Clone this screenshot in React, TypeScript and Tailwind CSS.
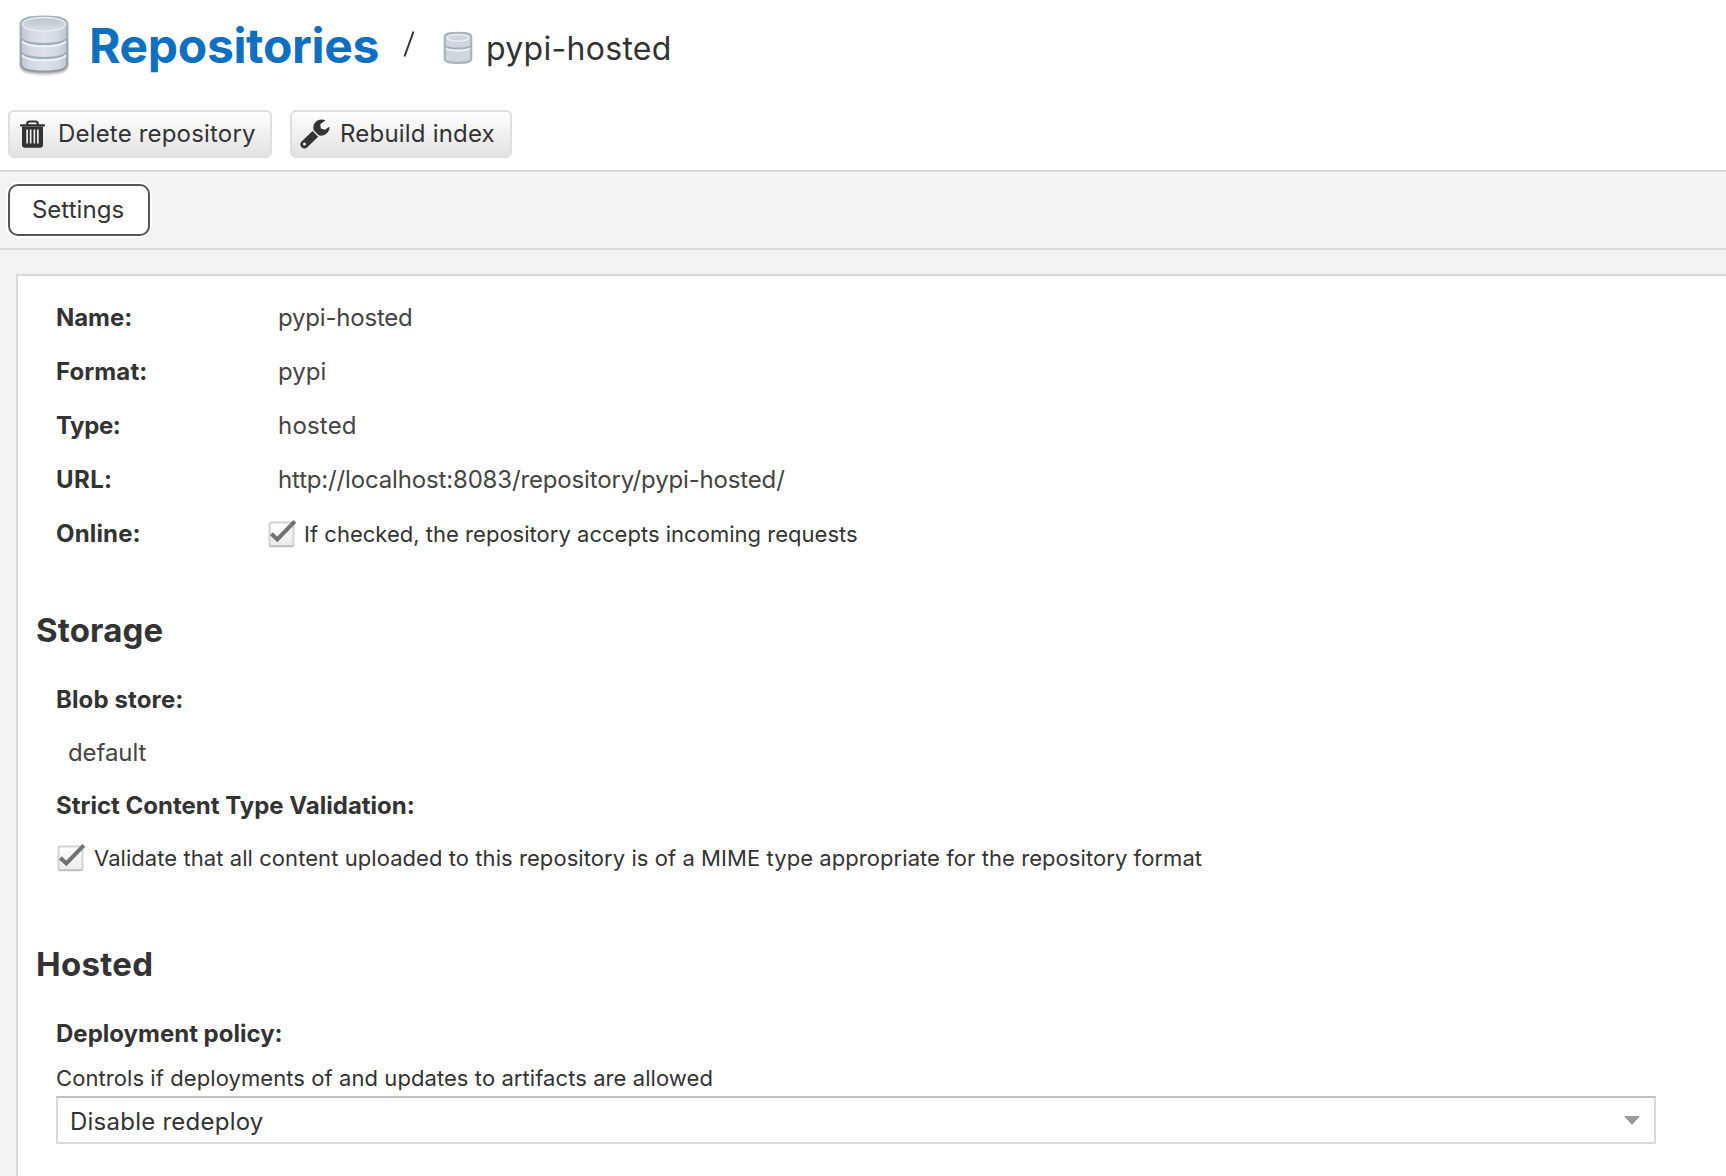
import React from "react";

function Database({ large = false }: { large?: boolean }) {
  if (large) {
    return (
      <svg className="h-[66px] w-[56px] shrink-0" viewBox="0 0 56 66">
        <defs>
          <linearGradient id="side" x1="0" x2="1" y1="0" y2="0">
            <stop offset="0" stopColor="#bcc5d0" />
            <stop offset="0.2" stopColor="#d3d8e3" />
            <stop offset="0.5" stopColor="#dde1eb" />
            <stop offset="0.8" stopColor="#d3d8e3" />
            <stop offset="1" stopColor="#bcc5d0" />
          </linearGradient>
          <linearGradient id="top" x1="0" x2="0" y1="0" y2="1">
            <stop offset="0" stopColor="#b7c3cc" />
            <stop offset="1" stopColor="#dbe2e6" />
          </linearGradient>
          <linearGradient id="rim" x1="0" x2="0" y1="0" y2="1">
            <stop offset="0" stopColor="#a6b4bd" />
            <stop offset="1" stopColor="#8f9ba4" />
          </linearGradient>
          <filter id="soft" x="-20%" y="-20%" width="140%" height="140%">
            <feGaussianBlur stdDeviation="1.3" />
          </filter>
          <filter id="smooth" x="-20%" y="-20%" width="140%" height="140%">
            <feGaussianBlur stdDeviation="0.5" />
          </filter>
        </defs>
        <path d="M4 12C4 6 14 4 28 4s24 2 24 8v41c0 6-10 8-24 8S4 59 4 53Z" transform="translate(0 1.5)" fill="#888" opacity="0.6" filter="url(#soft)" />
        <g filter="url(#smooth)">
          <path d="M4.800 12C4.800 6 14 4.500 28 4.500s23.200 1.500 23.200 7.500v40c0 6-9.200 7.500-23.200 7.500S4.800 58 4.800 52Z" fill="url(#side)" stroke="url(#rim)" strokeWidth="2" />
          <ellipse cx="28" cy="12.300" rx="21.600" ry="6.800" fill="url(#top)" stroke="#e9eef2" strokeWidth="1.300" />
          <path d="M5.500 27c4 4.200 12 5 22.500 5s18.500-.8 22.500-5M5.500 41c4 4.200 12 5 22.500 5s18.500-.8 22.500-5" fill="none" stroke="#a3aebb" strokeWidth="2.200" />
          <path d="M6 29.300c4 4.200 12 5 22 5s18-.8 22-5M6 43.300c4 4.200 12 5 22 5s18-.8 22-5" fill="none" stroke="#f1f3f7" strokeWidth="1.800" />
        </g>
      </svg>
    );
  }
  return (
    <svg className="h-[34px] w-[30px] shrink-0" viewBox="0 0 30 34">
      <g filter="url(#smooth)">
        <path d="M1.800 6C1.800 2.500 6 1.800 15 1.800S28.200 2.500 28.200 6v21.500c0 3.500-4.200 4.300-13.200 4.300S1.800 31 1.800 27.500Z" fill="#cfd6df" stroke="#aab4bd" strokeWidth="2.200" />
        <ellipse cx="15" cy="6.800" rx="11" ry="3.400" fill="#cdd6dd" stroke="#e8edf1" strokeWidth="1.500" />
        <path d="M2.500 15.300C5 17.100 9 17.500 15 17.500s10-.4 12.500-2.200" fill="none" stroke="#a3afbb" strokeWidth="1.800" />
        <path d="M3 17.400C5.500 19.200 9 19.600 15 19.600s9.500-.4 12-2.200" fill="none" stroke="#f3f5f8" strokeWidth="1.700" />
      </g>
    </svg>
  );
}

function Trash() {
  return (
    <svg className="h-[28px] w-[25px] shrink-0" viewBox="0 0 25 28">
      <path d="M7.200 5V4C7.200 2.300 8 1.500 9.700 1.500h5.600c1.700 0 2.500.8 2.500 2.500v1" fill="none" stroke="#333" strokeWidth="2.200" />
      <path d="M1 4.200h23a1 1 0 0 1 1 1V6.600H0V5.200a1 1 0 0 1 1-1Z" fill="#333" />
      <path fillRule="evenodd" d="M2 6.500h21V25c0 1.700-1 2.700-2.700 2.700H4.700C3 27.700 2 26.700 2 25ZM6.300 9.500v14h1.700V9.500ZM9.800 9.500v14h1.700V9.500ZM13.500 9.500v14h1.700V9.500ZM17 9.500v14h1.700V9.500Z" fill="#333" />
    </svg>
  );
}

function Wrench() {
  return (
    <svg className="h-[30px] w-[30px] shrink-0" viewBox="0 0 30 30">
      <path fillRule="evenodd" d="M12.500 12 18.200 17.700 7.300 28.300c-1.700 1.700-4 1.700-5.700 0s-1.700-4 0-5.700ZM4.500 23.400a1.600 1.600 0 1 0 0 3.200 1.600 1.600 0 0 0 0-3.200Z" fill="#333" />
      <path d="M25.500 1.200C21.500-.4 17.500.6 15.200 3.400 13 6 13 9.300 13.800 11.400L18.700 16.300C21.500 17.300 25 16.300 27.300 13.700 29.200 11.700 29.800 9.500 29.300 7.700L25 10.800 20.800 9.600 20.300 5.200Z" fill="#333" />
    </svg>
  );
}

function Check() {
  return (
    <svg className="h-[30px] w-[29px] shrink-0" viewBox="0 0 29 30">
      <defs>
        <linearGradient id="box" x1="0" x2="0" y1="0" y2="1">
          <stop offset="0" stopColor="#fff" />
          <stop offset="1" stopColor="#ececec" />
        </linearGradient>
      </defs>
      <g filter="url(#smooth)">
        <rect x="1.600" y="3.600" width="23.800" height="23.600" rx="1.500" fill="url(#box)" stroke="#d2d2d2" strokeWidth="2" />
        <path d="M1.500 27.300h24" stroke="#bbb" strokeWidth="1.600" />
        <path d="M3.300 14.800 9.300 20.500 26.800 2.300" fill="none" stroke="#727272" strokeWidth="4" />
      </g>
    </svg>
  );
}

function Field({ label, labelClass, children }: { label: string; labelClass: string; children: React.ReactNode }) {
  return (
    <div className="flex h-[54px] items-center">
      <div className={"w-[222px] shrink-0 font-bold " + labelClass}>{label}</div>
      {children}
    </div>
  );
}

export default function App() {
  return (
    <div className="flex h-[1176px] w-[1726px] flex-col overflow-hidden whitespace-nowrap bg-white font-['Inter',sans-serif] text-[24px] text-[#333]">
      <header className="flex h-[110px] shrink-0 items-start pl-4">
        <div className="pt-[12px]"><Database large /></div>
        <h1 className="ml-[17px] mt-[15px] text-[48px] font-bold leading-[62px] tracking-[-0.333px] text-[#0f6fc1]">Repositories</h1>
        <svg className="ml-[23px] mt-[30px] h-[28px] w-[14px]" viewBox="0 0 14 28"><path d="M2.500 26.500 11.500 1.500" stroke="#333" strokeWidth="2" /></svg>
        <div className="ml-[27px] mt-[31px]"><Database /></div>
        <span className="ml-[13px] mt-[29px] text-[32px] leading-[40px] tracking-[0.29px]">pypi-hosted</span>
      </header>

      <div className="flex h-[60px] shrink-0 gap-[18px] pl-2">
        <button className="flex h-[48px] w-[264px] items-center rounded-[6px] border-2 border-[#dfdfdf] bg-gradient-to-b from-white to-[#e2e2e2] pl-[10px]">
          <Trash />
          <span className="ml-[13px] tracking-[0.18px]">Delete repository</span>
        </button>
        <button className="flex h-[48px] w-[222px] items-center rounded-[6px] border-2 border-[#dfdfdf] bg-gradient-to-b from-white to-[#e2e2e2] pl-[8px]">
          <Wrench />
          <span className="ml-[10px] tracking-[0.2px]">Rebuild index</span>
        </button>
      </div>

      <nav className="flex h-[80px] shrink-0 border-y-2 border-[#dadada] bg-[#f3f3f3] pl-2 pt-[12px]">
        <button className="flex h-[52px] w-[142px] items-center justify-center rounded-[10px] border-2 border-[#555] bg-white pr-[2px] tracking-[0.04px] shadow-[0_0_0_2px_#fff]">Settings</button>
      </nav>

      <main className="flex flex-1 bg-[#f3f3f3] pl-4 pt-6">
        <div className="flex-1 border-l-2 border-t-2 border-[#dadada] bg-white pt-[15px]">
          <section className="pl-[38px]">
            <Field label="Name:" labelClass="tracking-[-0.056px]"><span className="tracking-[-0.2px] text-[#444]">pypi-hosted</span></Field>
            <Field label="Format:" labelClass="tracking-[0.1px]"><span className="tracking-[0.03px] text-[#444]">pypi</span></Field>
            <Field label="Type:" labelClass="tracking-[-0.4px]"><span className="tracking-[0.2px] text-[#444]">hosted</span></Field>
            <Field label="URL:" labelClass="tracking-[0.4px]"><span className="tracking-[-0.16px] text-[#444]">http://localhost:8083/repository/pypi-hosted/</span></Field>
            <Field label="Online:" labelClass="tracking-[0.15px]">
              <div className="-ml-[10px] flex items-center">
                <Check />
                <span className="ml-[7px] text-[22px] tracking-[0.018px]">If checked, the repository accepts incoming requests</span>
              </div>
            </Field>
          </section>

          <h2 className="mt-[51px] pl-[18px] text-[33px] font-bold leading-[36px] tracking-[0.149px]">Storage</h2>
          <section className="mt-6 pl-[38px]">
            <div className="font-bold leading-[56px] tracking-[0.12px]">Blob store:</div>
            <div className="pl-[12px] leading-[49px] tracking-[-0.088px] text-[#444]">default</div>
            <div className="font-bold leading-[58px] tracking-[0px]">Strict Content Type Validation:</div>
            <div className="-mt-[2px] flex h-[50px] items-center pl-[1px] text-[22px] tracking-[0.065px]">
              <Check />
              <span className="ml-[8px]">Validate that all content uploaded to this repository is of a MIME type appropriate for the repository format</span>
            </div>
          </section>

          <h2 className="mt-[63px] pl-[18px] text-[33px] font-bold leading-[36px] tracking-[0.3px]">Hosted</h2>
          <section className="mt-6 pl-[38px]">
            <div className="font-bold leading-[56px]">Deployment policy:</div>
            <div className="-mt-[2px] text-[22px] leading-[36px] tracking-[0.075px]">Controls if deployments of and updates to artifacts are allowed</div>
            <div className="flex h-[48px] w-[1600px] items-center justify-between border-2 border-[#d9d9d9] border-t-[#c0c0c0] pl-[12px] pr-[14px]">
              <span className="pt-[4px] tracking-[0.24px]">Disable redeploy</span>
              <svg className="h-[9px] w-[16px]" viewBox="0 0 16 9"><path d="M0 0h16L8 9Z" fill="#999" /></svg>
            </div>
          </section>
        </div>
      </main>
    </div>
  );
}
